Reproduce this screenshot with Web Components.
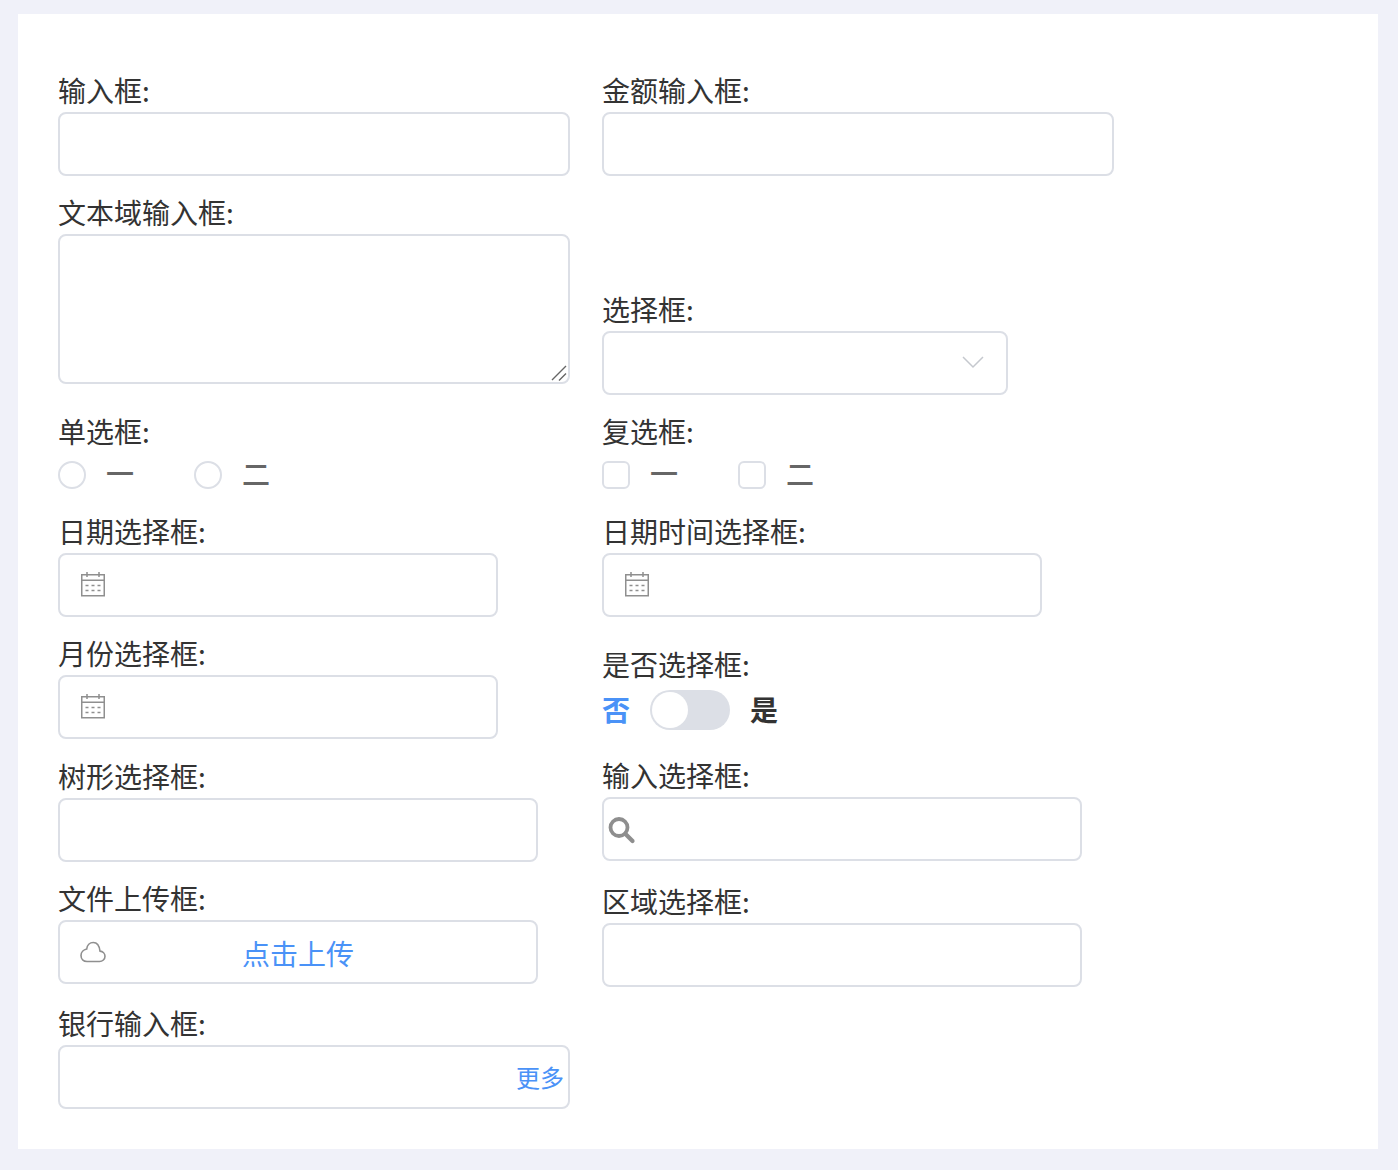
<!DOCTYPE html>
<html lang="zh">
<head>
<meta charset="utf-8">
<title>表单</title>
<style>
  html, body { margin: 0; background: #f0f1f9; }
  body { font-family: "Noto Sans CJK SC", "Liberation Sans", sans-serif; color: #333; }
</style>
</head>
<body>
<form-card>
  <div slot="left">
    <form-field label="输入框:"><text-box width="512"></text-box></form-field>
    <form-field label="文本域输入框:" style="margin-top:22px"><area-box></area-box></form-field>
    <form-field label="单选框:" style="margin-top:33px" gap="14"><choice-group type="radio"></choice-group></form-field>
    <form-field label="日期选择框:" style="margin-top:28px"><text-box width="440" icon="calendar"></text-box></form-field>
    <form-field label="月份选择框:" style="margin-top:22px"><text-box width="440" icon="calendar"></text-box></form-field>
    <form-field label="树形选择框:" style="margin-top:23px"><text-box width="480"></text-box></form-field>
    <form-field label="文件上传框:" style="margin-top:22px"><text-box width="480" icon="cloud"><span class="upload">点击上传</span></text-box></form-field>
    <form-field label="银行输入框:" style="margin-top:25px"><text-box width="512" more="更多"></text-box></form-field>
  </div>
  <div slot="right">
    <form-field label="金额输入框:"><text-box width="512"></text-box></form-field>
    <form-field label="选择框:" style="margin-top:119px"><text-box width="406" icon="chevron"></text-box></form-field>
    <form-field label="复选框:" style="margin-top:22px" gap="14"><choice-group type="checkbox"></choice-group></form-field>
    <form-field label="日期时间选择框:" style="margin-top:28px"><text-box width="440" icon="calendar"></text-box></form-field>
    <form-field label="是否选择框:" style="margin-top:33px" gap="10"><yes-no></yes-no></form-field>
    <form-field label="输入选择框:" style="margin-top:31px"><text-box width="480" icon="search"></text-box></form-field>
    <form-field label="区域选择框:" style="margin-top:26px"><text-box width="480"></text-box></form-field>
  </div>
</form-card>

<script>
const ICONS = {
  calendar: `<svg class="calendar" width="26" height="26" viewBox="0 0 26 26" fill="none" stroke="#8f8f8f" stroke-width="1.5">
      <rect x="1.75" y="3.75" width="22.5" height="21"/>
      <path d="M2 9.250h22M7 1v5M19 1v5"/>
      <path d="M5.500 14.500h3M11.500 14.500h3M17.500 14.500h3M5.500 19.500h3M11.500 19.500h3M17.500 19.500h3"/>
    </svg>`,
  cloud: `<svg class="cloud" width="26" height="22" viewBox="0 0 26 22" fill="none" stroke="#8f8f8f" stroke-width="1.6">
      <path d="M7 20.500h12.500c3 0 5.500-2.300 5.500-5.200 0-2.800-2.200-5-5-5.200C19.400 5.200 16.900 1.500 13.300 1.500 9.700 1.500 7.100 4.300 6.700 8 3.500 8.600 1 11.300 1 14.600 1 18 3.500 20.500 7 20.500z"/>
    </svg>`,
  chevron: `<svg class="chevron" width="24" height="14" viewBox="0 0 24 14" fill="none" stroke="#c5c8ce" stroke-width="1.5">
      <path d="M3 1l10 10L23 1"/>
    </svg>`,
  search: `<svg class="search" width="28" height="28" viewBox="0 0 28 28" fill="none" stroke="#8e8e8e">
      <circle cx="11" cy="10.500" r="8.500" stroke-width="3.800"/>
      <path d="M17.500 17l7 7" stroke-width="4.200" stroke-linecap="round"/>
    </svg>`,
};

class FormCard extends HTMLElement {
  constructor() {
    super();
    this.attachShadow({ mode: "open" });
    this.shadowRoot.innerHTML = `
    <style>
      :host {
        display: grid;
        grid-template-columns: 544px 1fr;
        height: 1135px;
        box-sizing: border-box;
        margin: 14px 20px 21px 18px;
        padding: 62px 40px 0;
        background: #fff;
      }
    </style>
    <slot name="left"></slot>
    <slot name="right"></slot>
    `;
  }
}

class FormField extends HTMLElement {
  constructor() {
    super();
    this.attachShadow({ mode: "open" });
    this.shadowRoot.innerHTML = `
    <style>
      :host { display: block; }
      .label {
        height: 30px;
        line-height: 28px;
        font-size: 28px;
        color: #333;
        white-space: nowrap;
      }
    </style>
    <div class="label"></div>
    <slot></slot>
    `;
  }

  connectedCallback() {
    const label = this.shadowRoot.querySelector(".label");
    label.textContent = this.getAttribute("label");
    label.style.marginBottom = (this.getAttribute("gap") || 6) + "px";
  }
}

class TextBox extends HTMLElement {
  constructor() {
    super();
    this.attachShadow({ mode: "open" });
    this.shadowRoot.innerHTML = `
    <style>
      :host {
        display: block;
        position: relative;
        box-sizing: border-box;
        height: 64px;
        border: 2px solid #dcdfe6;
        border-radius: 8px;
        background: #fff;
      }
      .slot-wrap {
        display: flex;
        height: 100%;
        padding-top: 2px;
        box-sizing: border-box;
        align-items: center;
        justify-content: center;
        font-size: 28px;
        color: #4a92f7;
      }
      svg, .more { position: absolute; }
      .calendar { left: 20px; top: 16px; }
      .cloud { left: 20px; top: 19px; }
      .chevron { right: 22px; top: 23px; }
      .search { left: 4px; top: 18px; }
      .more {
        right: 4px;
        top: 0;
        line-height: 60px;
        font-size: 24px;
        color: #4a92f7;
      }
    </style>
    <div class="slot-wrap"><slot></slot></div>
    `;
  }

  connectedCallback() {
    this.style.width = this.getAttribute("width") + "px";
    const icon = this.getAttribute("icon");
    if (icon) {
      this.shadowRoot.querySelector(".slot-wrap").insertAdjacentHTML("beforebegin", ICONS[icon]);
    }
    const more = this.getAttribute("more");
    if (more) {
      const span = document.createElement("span");
      span.className = "more";
      span.textContent = more;
      this.shadowRoot.appendChild(span);
    }
  }
}

class AreaBox extends HTMLElement {
  constructor() {
    super();
    this.attachShadow({ mode: "open" });
    this.shadowRoot.innerHTML = `
    <style>
      :host { display: block; position: relative; width: 512px; height: 150px; }
      textarea {
        display: block;
        box-sizing: border-box;
        width: 512px;
        height: 150px;
        margin: 0;
        border: 2px solid #dcdfe6;
        border-radius: 8px;
        outline: none;
        background: #fff;
        resize: none;
      }
      /* grip is larger than the native one, so it is drawn over the corner */
      svg { position: absolute; right: 3px; bottom: 3px; }
    </style>
    <textarea></textarea>
    <svg width="16" height="16" viewBox="0 0 16 16" fill="none" stroke="#666" stroke-width="1.4">
      <path d="M1 15L15 1M8 15.500l7-7"/>
    </svg>
    `;
  }
}

class ChoiceGroup extends HTMLElement {
  constructor() {
    super();
    this.attachShadow({ mode: "open" });
    this.shadowRoot.innerHTML = `
    <style>
      :host { display: flex; height: 28px; }
      .item { display: flex; align-items: center; width: 136px; }
      .mark {
        box-sizing: border-box;
        width: 28px;
        height: 28px;
        margin-right: 20px;
        border: 2px solid #dcdfe6;
        border-radius: 50%;
        background: #fff;
      }
      :host([type="checkbox"]) .mark { border-radius: 6px; }
      .text { height: 28px; font-size: 28px; line-height: 24px; font-weight: 500; color: #666; }
    </style>
    <div class="item"><span class="mark"></span><span class="text">一</span></div>
    <div class="item"><span class="mark"></span><span class="text">二</span></div>
    `;
  }
}

class YesNo extends HTMLElement {
  constructor() {
    super();
    this.attachShadow({ mode: "open" });
    this.shadowRoot.innerHTML = `
    <style>
      :host {
        display: flex;
        gap: 20px;
        height: 40px;
        font-size: 28px;
        line-height: 38px;
        font-weight: 700;
        color: #333;
      }
      .off { color: #4a92f7; }
      .track {
        width: 80px;
        height: 40px;
        padding: 2px;
        box-sizing: border-box;
        border-radius: 20px;
        background: #dcdfe6;
      }
      .knob {
        width: 36px;
        height: 36px;
        border-radius: 50%;
        background: #fff;
      }
    </style>
    <span class="off">否</span>
    <div class="track"><div class="knob"></div></div>
    <span>是</span>
    `;
  }
}

customElements.define("form-card", FormCard);
customElements.define("form-field", FormField);
customElements.define("text-box", TextBox);
customElements.define("area-box", AreaBox);
customElements.define("choice-group", ChoiceGroup);
customElements.define("yes-no", YesNo);
</script>
</body>
</html>
